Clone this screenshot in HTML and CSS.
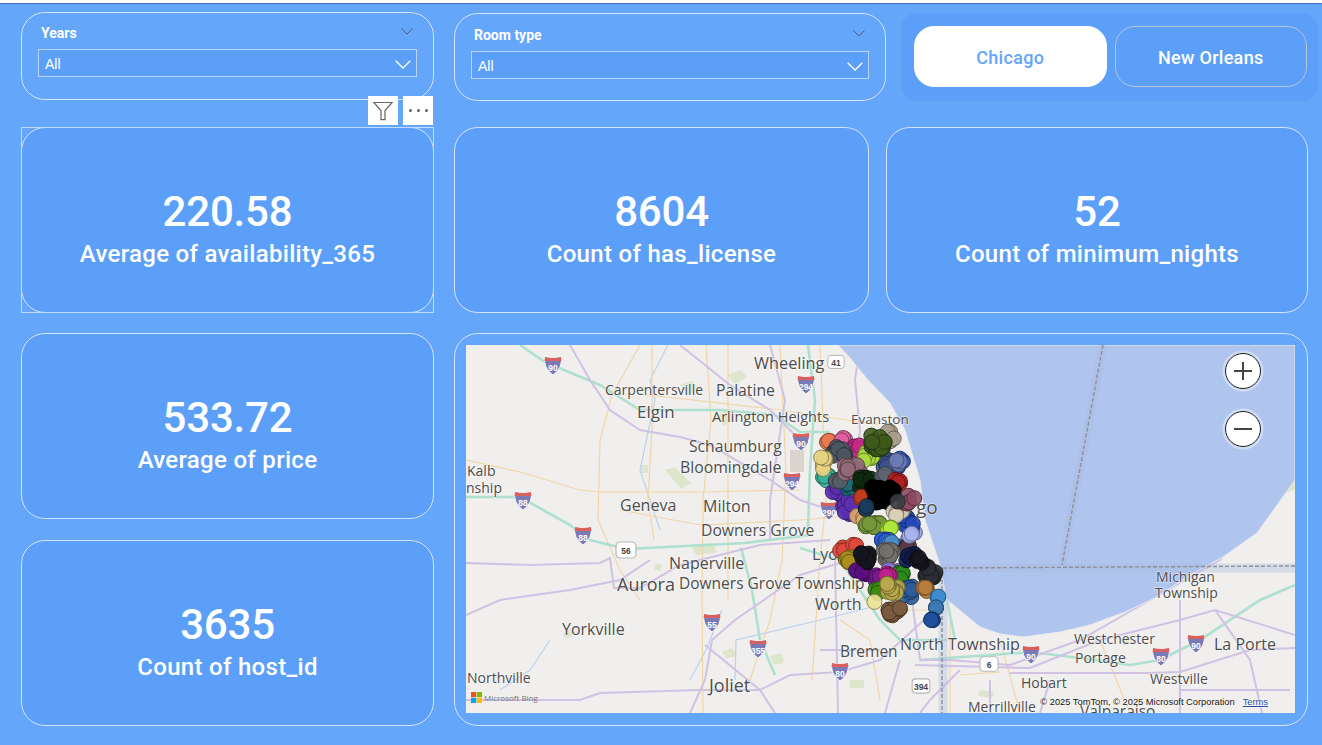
FILE: index.html
```html
<!DOCTYPE html>
<html lang="en">
<head>
  <meta charset="UTF-8" />
  <title>Airbnb listings report</title>
  <link rel="stylesheet" href="styles.css">
</head>
<body>
  <div class="top-strip"></div>

  <div class="row row-top">
    <div class="slicer slicer-years">
      <div class="slicer-head">
        <span>Years</span>
        <svg class="chev-small" viewBox="0 0 12 7"><path d="M0.5 0.5 6 6 11.5 0.5"/></svg>
      </div>
      <div class="dropdown">
        <span>All</span>
        <svg class="chev-white" viewBox="0 0 16 9"><path d="M0.7 0.7 8 8 15.3 0.7"/></svg>
      </div>
    </div>

    <div class="slicer slicer-room">
      <div class="slicer-head">
        <span>Room type</span>
        <svg class="chev-small" viewBox="0 0 12 7"><path d="M0.5 0.5 6 6 11.5 0.5"/></svg>
      </div>
      <div class="dropdown">
        <span>All</span>
        <svg class="chev-white" viewBox="0 0 16 9"><path d="M0.7 0.7 8 8 15.3 0.7"/></svg>
      </div>
    </div>

    <div class="city-group">
      <button class="city-btn active">Chicago</button>
      <button class="city-btn">New Orleans</button>
    </div>
  </div>

  <div class="row row-kpi">
    <div class="card kpi kpi-a selected">
      <div class="visual-tools">
        <div class="tool">
          <svg viewBox="0 0 20 20" width="20" height="20"><path d="M0.8 1.5H19.2L12 9.6V18.6H8V9.6Z"/></svg>
        </div>
        <div class="tool dots"><i></i><i></i><i></i></div>
      </div>
      <div class="kpi-value">220.58</div>
      <div class="kpi-label">Average of availability_365</div>
    </div>
    <div class="card kpi kpi-b">
      <div class="kpi-value">8604</div>
      <div class="kpi-label">Count of has_license</div>
    </div>
    <div class="card kpi kpi-c">
      <div class="kpi-value">52</div>
      <div class="kpi-label">Count of minimum_nights</div>
    </div>
  </div>

  <div class="row row-bottom">
    <div class="left-col">
      <div class="card kpi kpi-a">
        <div class="kpi-value">533.72</div>
        <div class="kpi-label">Average of price</div>
      </div>
      <div class="card kpi kpi-a">
        <div class="kpi-value">3635</div>
        <div class="kpi-label">Count of host_id</div>
      </div>
    </div>

    <div class="card map-card">
      <div class="map">
        <!-- viewBox uses page coordinates so the map data is easy to read against the screenshot -->
        <svg class="map-svg" viewBox="466 345 829 368" width="829" height="368">
          <defs>
            <symbol id="interstate" viewBox="0 0 18 20" overflow="visible">
              <path d="M1 1Q9 3 17 1Q19 12 9 19Q-1 12 1 1Z" fill="#7a7bb4" stroke="#fff" stroke-width="0.8"/>
              <path d="M1 1Q9 3 17 1L17.4 5H0.6Z" fill="#d9605c"/>
            </symbol>
            <symbol id="route" viewBox="0 0 22 18" overflow="visible">
              <rect x="1" y="1" width="20" height="16" rx="4" fill="#fff" stroke="#b5b5b5" stroke-width="1.2"/>
            </symbol>
          </defs>

          <rect class="land" x="466" y="345" width="829" height="368"/>

          <g class="parks">
            <path d="M680 385l12-4 6 8-10 6z"/><path d="M727 375l14-5 6 7-12 7z"/><path d="M716 415l12-5 6 10-10 6z"/>
            <path d="M665 470l10-3 16 16-10 6z"/><path d="M640 465l8 0 0 8-8 0z"/><path d="M690 545l24-2 2 10-20 2z"/>
            <path d="M656 563l6 2-2 6-6-2z"/><path d="M562 635l8-6 4 4-6 6z"/><path d="M722 652l10-4 6 8-12 2z"/>
            <path d="M770 656l12-3 2 10-10 2z"/><path d="M850 680l14 0 0 8-14 0z"/><path d="M1060 605l50-32 4 4-44 36z"/>
            <path d="M980 690l14 2-2 6-14-2z"/><path d="M1120 640l10-4 2 6-8 4z"/><path d="M1270 482l25-6v14l-20 6z"/>
            <path d="M790 450h14v22h-14z"/>
          </g>

          <g class="water-lines">
            <path d="M668 345 650 380 655 400 640 470 660 530"/>
            <path d="M722 610 706 650 690 680"/>
            <path d="M900 600 820 620 736 640 735 680"/>
            <path d="M550 640 530 670 500 690"/>
          </g>

          <g class="minor">
            <path d="M466 460 520 472 580 490 600 492 700 492 800 490"/>
            <path d="M640 345 612 395 600 440 598 520 620 570 640 600"/>
            <path d="M652 345V430L648 500 654 540"/>
            <path d="M706 345 711 420 703 500 702 600 703 713"/>
            <path d="M728 345V600"/>
            <path d="M780 345 786 470 782 560 770 620 750 680"/>
            <path d="M820 345 826 500 820 560 812 680"/>
            <path d="M640 394 780 410 880 425"/>
            <path d="M620 510 700 525 800 520 860 515"/>
            <path d="M840 620 870 640 880 700"/>
            <path d="M880 610H940"/>
            <path d="M950 620V713M1000 640 1020 713M1100 640 1130 713"/>
            <path d="M960 675 1000 672"/>
          </g>

          <g class="teal">
            <path d="M520 345 545 362 600 385 640 410H720L775 415 800 432H830"/>
            <path d="M466 497H520L570 525 590 540 626 549 745 543 810 535"/>
            <path d="M741 548 752 590 760 640 775 675"/>
            <path d="M808 345 815 400 810 470 808 530"/>
            <path d="M800 548 840 560 880 620 900 640 947 640"/>
            <path d="M920 660 1031 652 1080 658 1130 665 1160 660 1200 640 1260 600 1295 585"/>
            <path d="M947 600 955 640"/>
          </g>

          <g class="purple">
            <path d="M570 345 590 380 610 410 640 430 680 437 710 445 770 480 800 500 830 510"/>
            <path d="M680 345 730 385 770 410 800 440"/>
            <path d="M770 345 785 400 770 500 770 540"/>
            <path d="M860 345 855 380 860 430 850 520"/>
            <path d="M466 563 530 565 600 563 610 558 614 588H640L680 565 760 545 830 540"/>
            <path d="M466 615 500 600 570 590 620 580 650 560"/>
            <path d="M850 560 800 575 735 620 712 640 705 680 690 713"/>
            <path d="M705 645 760 690 775 713"/>
            <path d="M466 700H580L600 693 700 690 760 690 790 675 840 672 880 660 935 610"/>
            <path d="M835 560 838 713"/>
            <path d="M820 650H880 M900 660 885 713"/>
            <path d="M912 600 920 660 950 660 1010 665 1080 640 1150 600 1220 560 1270 500 1295 480"/>
            <path d="M915 665 1030 668 1100 640 1180 620 1215 610 1295 635"/>
            <path d="M1010 673H1150L1180 672 1250 650 1295 648"/>
            <path d="M1215 610 1250 660 1262 713"/>
            <path d="M1180 600V713"/>
            <path d="M960 670 930 700 920 713 M990 680V713"/>
            <path d="M1180 690 1290 690"/>
            <path d="M1050 680 1040 713"/>
          </g>

          <path class="lake" d="M838 345 850 358 868 380 890 403 905 430 920 480 925 520 940 565 947 600 962 612 980 627 1000 634 1023 637 1060 632 1090 625 1125 612 1157 597 1190 575 1223 557 1257 533 1295 480V345Z"/>

          <g class="border-band">
            <path d="M1103 345 1062 565"/>
            <path d="M943 568H1295"/>
            <path d="M943 568V713"/>
          </g>
          <g class="border-dash">
            <path d="M1103 345 1062 565"/>
            <path d="M943 568 1295 566"/>
            <path d="M942 568V713"/>
          </g>

          <g class="places">
            <text x="754" y="369" font-size="16.3">Wheeling</text>
            <text x="605" y="395" font-size="14">Carpentersville</text>
            <text x="716" y="396" font-size="15.7">Palatine</text>
            <text x="637" y="418" font-size="17">Elgin</text>
            <text x="712" y="422" font-size="14.5">Arlington Heights</text>
            <text x="851" y="424" font-size="13.5">Evanston</text>
            <text x="689" y="452" font-size="15.7">Schaumburg</text>
            <text x="680" y="473" font-size="15.8">Bloomingdale</text>
            <text x="467" y="476" font-size="14">Kalb</text>
            <text x="466" y="493" font-size="14" class="cut">nship</text>
            <text x="620" y="511" font-size="16">Geneva</text>
            <text x="703" y="512" font-size="16">Milton</text>
            <text x="701" y="536" font-size="15.7">Downers Grove</text>
            <text x="669" y="569" font-size="16">Naperville</text>
            <text x="812" y="560" font-size="16">Lyo</text>
            <text x="617" y="591" font-size="18">Aurora</text>
            <text x="679" y="589" font-size="15.5">Downers Grove Township</text>
            <text x="815" y="610" font-size="16">Worth</text>
            <text x="562" y="635" font-size="16">Yorkville</text>
            <text x="840" y="657" font-size="15.5">Bremen</text>
            <text x="900" y="650" font-size="16">North Township</text>
            <text x="467" y="683" font-size="14">Northville</text>
            <text x="709" y="692" font-size="18">Joliet</text>
            <text x="1156" y="582" font-size="14">Michigan</text>
            <text x="1155" y="598" font-size="14">Township</text>
            <text x="1074" y="644" font-size="14">Westchester</text>
            <text x="1075" y="663" font-size="14">Portage</text>
            <text x="1214" y="650" font-size="16">La Porte</text>
            <text x="1021" y="688" font-size="14">Hobart</text>
            <text x="1150" y="684" font-size="14">Westville</text>
            <text x="968" y="712" font-size="14">Merrillville</text>
            <text x="1080" y="717" font-size="15.5">Valparaiso</text>
            <text x="916" y="514" font-size="19">go</text>
          </g>

          <g class="shields">
            <use href="#interstate" x="544" y="356" width="18" height="20"/><text x="553" y="371">90</text>
            <use href="#interstate" x="797" y="375" width="18" height="20"/><text x="806" y="390">294</text>
            <use href="#interstate" x="792" y="432" width="18" height="20"/><text x="801" y="447">90</text>
            <use href="#interstate" x="783" y="472" width="18" height="20"/><text x="792" y="487">294</text>
            <use href="#interstate" x="514" y="491" width="18" height="20"/><text x="523" y="506">88</text>
            <use href="#interstate" x="820" y="501" width="18" height="20"/><text x="829" y="516">290</text>
            <use href="#interstate" x="574" y="526" width="18" height="20"/><text x="583" y="541">88</text>
            <use href="#interstate" x="703" y="613" width="18" height="20"/><text x="712" y="628">55</text>
            <use href="#interstate" x="749" y="639" width="18" height="20"/><text x="758" y="654">355</text>
            <use href="#interstate" x="831" y="662" width="18" height="20"/><text x="840" y="677">80</text>
            <use href="#interstate" x="1022" y="645" width="18" height="20"/><text x="1031" y="660">90</text>
            <use href="#interstate" x="1152" y="647" width="18" height="20"/><text x="1161" y="662">80</text>
            <use href="#interstate" x="1187" y="634" width="18" height="20"/><text x="1196" y="649">90</text>
            <use href="#route" x="615" y="541" width="22" height="18"/><text class="dark" x="626" y="554">56</text>
            <use href="#route" x="910" y="678" width="22" height="16"/><text class="dark" x="921" y="690">394</text>
            <use href="#route" x="979" y="655" width="20" height="18"/><text class="dark" x="989" y="668">6</text>
            <use href="#route" x="827" y="353" width="18" height="18"/><text class="dark" x="836" y="366">41</text>
          </g>

          <g id="markers"></g>
        </svg>

        <div class="zoom-btn zoom-in"><span class="bar"></span><span class="bar bar-v"></span></div>
        <div class="zoom-btn zoom-out"><span class="bar"></span></div>

        <div class="bing">
          <svg viewBox="0 0 11 11" width="11" height="11">
            <rect width="5.2" height="5.2" fill="#f25022"/><rect x="5.8" width="5.2" height="5.2" fill="#7fba00"/>
            <rect y="5.8" width="5.2" height="5.2" fill="#00a4ef"/><rect x="5.8" y="5.8" width="5.2" height="5.2" fill="#ffb900"/>
          </svg>
          <span>Microsoft Bing</span>
        </div>
        <div class="copyright">
          <span>© 2025 TomTom, © 2025 Microsoft Corporation</span>
          <a>Terms</a>
        </div>
      </div>
    </div>
  </div>

  <script src="map.js"></script>
</body>
</html>
```

FILE: styles.css
```css
* {
  box-sizing: border-box;
}

body {
  margin: 0;
  height: 745px;
  overflow: hidden;
  background: #64a6fa;
  font-family: 'Roboto', 'Liberation Sans', sans-serif;
  color: #fff;
}

.top-strip {
  height: 3px;
  background: #fff;
  box-shadow: 0 1px 1px rgba(40, 70, 130, 0.6);
}

.row {
  display: flex;
  padding-left: 21px;
}

.row-top {
  height: 115px;
  padding-top: 9px;
}

.row-kpi {
  height: 215px;
  padding-top: 9px;
}

.row-bottom {
  padding-top: 0;
}

/* slicers */
.slicer {
  height: 88px;
  border: 1px solid #d3e5fe;
  border-radius: 24px;
}

.slicer-years {
  width: 413px;
  padding: 12px 16px 0 16px;
}

.slicer-room {
  width: 432px;
  margin: 1px 0 0 20px;
  padding: 13px 16px 0 16px;
}

.slicer-room .dropdown {
  margin-top: -1px;
}

.slicer-years .dropdown {
  margin-top: -1px;
}

.slicer-head {
  display: flex;
  justify-content: space-between;
  align-items: flex-start;
  height: 25px;
  padding: 0 4px 0 3px;
  font-size: 14px;
  font-weight: 700;
}

.chev-small {
  width: 12px;
  height: 7px;
  margin-top: 3px;
  fill: none;
  stroke: #4f5e78;
  stroke-width: 1;
}

.dropdown {
  display: flex;
  justify-content: space-between;
  align-items: center;
  height: 28px;
  padding: 2px 5px 0 6px;
  background: #5c9ff8;
  border: 1px solid #b9d5fc;
  font-family: 'Liberation Sans', sans-serif;
  font-size: 14px;
}

.chev-white {
  width: 16px;
  height: 9px;
  fill: none;
  stroke: #fff;
  stroke-width: 1.3;
}

.city-group {
  display: flex;
  gap: 8px;
  width: 417px;
  height: 88px;
  margin: 1px 0 0 15px;
  padding: 13px 11px 14px 13px;
  background: #5c9ff8;
  border-radius: 16px;
}

.city-btn {
  flex: 1;
  padding-top: 3px;
  border: 1px solid #b7c6d8;
  border-radius: 20px;
  background: #5c9ff8;
  color: #fff;
  font-family: 'Roboto', sans-serif;
  font-size: 18px;
  font-weight: 500;
  letter-spacing: 0.3px;
}

.city-btn.active {
  background: #fff;
  border-color: #fff;
  color: #64a6fa;
}

/* cards */
.card {
  background: #5c9ff8;
  border: 1px solid #d3e5fe;
  border-radius: 24px;
}

.kpi {
  display: flex;
  flex-direction: column;
  align-items: center;
  justify-content: center;
  height: 186px;
  padding-top: 14px;
}

.kpi-a {
  width: 413px;
}

.kpi-b {
  width: 415px;
  margin-left: 20px;
}

.kpi-c {
  width: 422px;
  margin-left: 17px;
}

.kpi-value {
  font-size: 42px;
  font-weight: 500;
  line-height: 54px;
  letter-spacing: -0.2px;
}

.kpi-label {
  font-size: 24px;
  font-weight: 500;
  line-height: 30px;
  letter-spacing: 0.3px;
}

.selected {
  position: relative;
}

.selected::after {
  content: '';
  position: absolute;
  inset: -1px;
  border: 1px solid #c2dafd;
  pointer-events: none;
}

.visual-tools {
  position: absolute;
  top: -32px;
  right: 0;
  display: flex;
  gap: 5px;
}

.tool {
  display: flex;
  align-items: center;
  justify-content: center;
  width: 30px;
  height: 29px;
  padding-top: 0;
  background: #fff;
}

.tool svg {
  fill: none;
  stroke: #666;
  stroke-width: 1.2;
}

.dots {
  gap: 5px;
}

.dots i {
  width: 3px;
  height: 3px;
  border-radius: 50%;
  background: #666;
}

/* bottom area */
.left-col {
  display: flex;
  flex-direction: column;
  gap: 21px;
}

.map-card {
  width: 854px;
  height: 393px;
  margin-left: 20px;
  padding: 11px 12px 12px 11px;
  background: #64a6fa;
}

.map {
  position: relative;
  width: 829px;
  height: 368px;
  overflow: hidden;
}

.map-svg {
  display: block;
}

.land {
  fill: #f0efed;
}

.lake {
  fill: #b0c5ee;
  stroke: #e9e9ee;
  stroke-width: 1;
}

.parks path {
  fill: #dde6cc;
}

.parks path:last-child {
  fill: #d9d4cc;
}

.water-lines path {
  fill: none;
  stroke: #bcd0f0;
  stroke-width: 1.2;
}

.minor path {
  fill: none;
  stroke: #f0d6a6;
  stroke-width: 1.2;
}

.teal path {
  fill: none;
  stroke: #aee0d0;
  stroke-width: 2.6;
}

.purple path {
  fill: none;
  stroke: #cfc2e2;
  stroke-width: 2;
}

.border-band path {
  fill: none;
  stroke: #a5b8dc;
  stroke-opacity: 0.35;
  stroke-width: 9;
}

.border-dash path {
  fill: none;
  stroke: #8c8f96;
  stroke-width: 1.4;
  stroke-dasharray: 4 2;
}

.places text {
  fill: #4c4c4c;
  font-family: 'Open Sans', sans-serif;
  paint-order: stroke;
  stroke: rgba(255, 255, 255, 0.55);
  stroke-width: 1.5px;
}

.shields text {
  fill: #fff;
  font-family: 'Liberation Sans', sans-serif;
  font-size: 8.5px;
  font-weight: 700;
  text-anchor: middle;
}

.shields text.dark {
  fill: #444;
}

.zoom-btn {
  position: absolute;
  left: 759px;
  width: 36px;
  height: 36px;
  border: 1.5px solid #1c1c1c;
  border-radius: 50%;
  background: #fff;
  box-shadow: 0 0 0 2.5px rgba(255, 255, 255, 0.4);
}

.zoom-in {
  top: 8px;
}

.zoom-out {
  top: 66px;
}

.bar {
  position: absolute;
  top: 15.5px;
  left: 8px;
  width: 18px;
  height: 2px;
  background: #444;
}

.bar-v {
  top: 8px;
  left: 16px;
  width: 2px;
  height: 18px;
}

.bing {
  position: absolute;
  left: 5px;
  bottom: 10px;
  display: flex;
  align-items: center;
  gap: 2px;
  font-family: 'Open Sans', sans-serif;
  font-size: 8px;
  color: #777;
}

.copyright {
  position: absolute;
  right: 27px;
  bottom: 5px;
  display: flex;
  gap: 8px;
  font-family: 'Liberation Sans', sans-serif;
  font-size: 9.3px;
  line-height: 11px;
  color: #111;
  text-shadow: 0 0 2px #fff, 0 0 2px #fff;
}

.copyright a {
  color: #2a4aa8;
  text-decoration: underline;
}
```

FILE: map.js
```js
// marker clusters: x, y, spread x, spread y, fill, count - drawn in order, later ones on top
const clusters = [
  [829, 442, 2, 2, '#e8794e', 3], [843, 439, 2, 2, '#e05f9f', 3], [857, 448, 5, 3, '#c42a86', 6],
  [912, 533, 4, 6, '#8fa0e6', 5], [907, 523, 6, 8, '#2448b8', 10], [895, 470, 8, 14, '#2448b8', 10],
  [825, 477, 4, 4, '#37b39c', 6], [838, 492, 6, 5, '#5b30b0', 10], [850, 507, 7, 8, '#5b30b0', 12],
  [850, 487, 6, 5, '#1d6b78', 8], [838, 452, 8, 5, '#4d5560', 14], [822, 463, 3, 6, '#e6d382', 6],
  [838, 482, 4, 3, '#545c66', 5], [867, 457, 6, 6, '#a9dc3f', 8], [890, 438, 4, 7, '#a89f8c', 7],
  [878, 443, 7, 8, '#3e5a1c', 20], [852, 468, 8, 6, '#946a78', 18], [868, 483, 8, 7, '#0e2a0e', 12],
  [890, 465, 7, 5, '#3d5290', 10], [897, 462, 4, 4, '#6c7cb4', 5], [885, 477, 4, 3, '#5d6470', 4],
  [862, 497, 2, 3, '#c23c1e', 3], [898, 482, 4, 3, '#b02020', 5], [860, 518, 5, 3, '#e0a870', 5],
  [883, 495, 11, 8, '#000000', 50], [897, 510, 6, 6, '#d9cfb8', 8], [910, 500, 5, 5, '#8c4a60', 6],
  [897, 502, 1, 1, '#3a3e44', 1], [866, 508, 2, 2, '#1c3c5c', 3], [872, 525, 8, 3, '#76983a', 14],
  [888, 530, 4, 3, '#b0e83c', 5], [887, 542, 6, 3, '#2a5cd0', 6], [842, 549, 3, 2, '#e0483c', 4],
  [855, 545, 3, 2, '#e0483c', 4], [848, 560, 5, 3, '#a8901e', 7], [897, 545, 8, 3, '#4c8cc8', 8],
  [905, 547, 4, 3, '#5a3a46', 5], [912, 533, 3, 3, '#a8b4f0', 2], [862, 572, 6, 3, '#5a1080', 8],
  [875, 578, 5, 3, '#7a1a90', 6], [865, 558, 4, 5, '#15151e', 10], [888, 555, 5, 5, '#74706a', 12],
  [895, 572, 8, 3, '#8c80e0', 5], [902, 575, 7, 5, '#2c8a1c', 10], [888, 575, 3, 2, '#c02090', 4],
  [912, 558, 6, 4, '#101c4c', 10], [930, 572, 6, 6, '#2a2e34', 16], [920, 560, 4, 3, '#15151e', 5],
  [878, 590, 3, 3, '#3c8c14', 3], [875, 601, 1, 1, '#f0e294', 1], [908, 592, 5, 6, '#2c5c9c', 8],
  [893, 588, 6, 5, '#b8a84c', 12], [925, 589, 2, 2, '#b87c3c', 4], [937, 598, 2, 2, '#3c8cd0', 2],
  [937, 608, 1, 2, '#3c78b0', 2], [933, 620, 3, 1, '#20509c', 4], [895, 612, 7, 4, '#7c5c40', 10]
];

// small seeded generator so the picture is the same on every load
let seed = 42;
function rand() {
  seed = (seed * 16807) % 2147483647;
  return seed / 2147483647 * 2 - 1;
}

function shade(hex) {
  const n = parseInt(hex.slice(1), 16);
  const part = s => Math.round(((n >> s) & 255) * 0.6);
  return `rgb(${part(16)},${part(8)},${part(0)})`;
}

const markers = document.getElementById('markers');
let html = '';
clusters.forEach(([x, y, sx, sy, fill, count]) => {
  for (let i = 0; i < count; i++) {
    const cx = (x + rand() * sx).toFixed(1);
    const cy = (y + rand() * sy).toFixed(1);
    html += `<circle cx="${cx}" cy="${cy}" r="7.5" fill="${fill}" fill-opacity="0.9" stroke="${shade(fill)}" stroke-width="1"/>`;
  }
});
markers.innerHTML = html;
```
